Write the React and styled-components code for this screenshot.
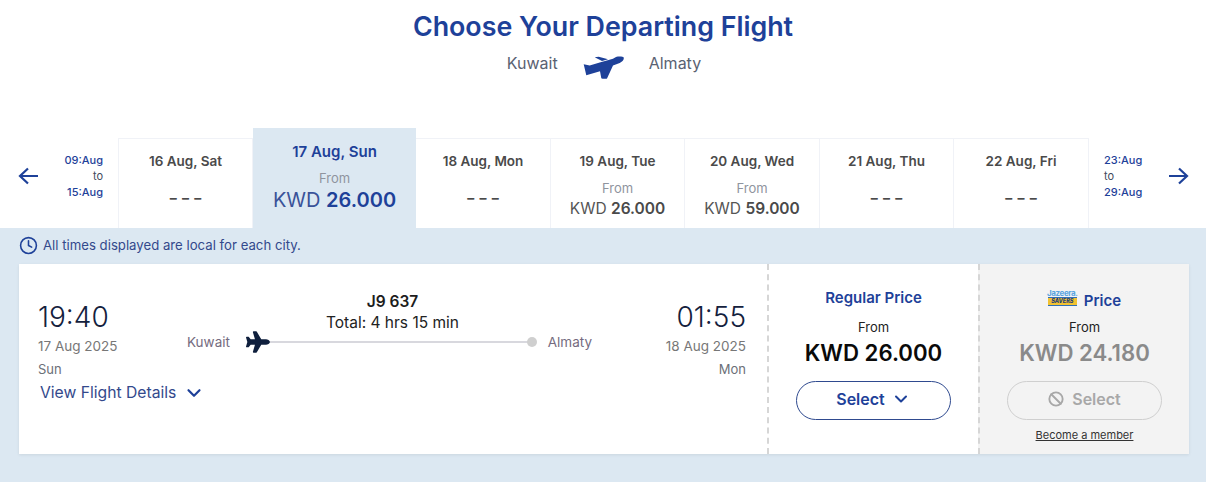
import React from 'react';
import styled, { createGlobalStyle } from 'styled-components';
import { FaPlane } from 'react-icons/fa';
import { LuBan, LuChevronDown, LuClock } from 'react-icons/lu';

const BLUE = '#1e4199';

const GlobalStyle = createGlobalStyle`
  html, body {
    margin: 0;
    padding: 0;
    background: #fff;
    font-family: Inter, "Liberation Sans", sans-serif;
  }
  * { box-sizing: border-box; }
`;

const Page = styled.div`
  width: 1206px;
  height: 482px;
  overflow: hidden;
  display: flex;
  flex-direction: column;
`;

const Header = styled.header`
  height: 128px;
  padding-top: 8px;
  display: flex;
  flex-direction: column;
  align-items: center;
`;

const Title = styled.h1`
  margin: 0;
  font-size: 26.8px;
  line-height: 36px;
  font-weight: 600;
  color: ${BLUE};
`;

const Route = styled.div`
  display: flex;
  align-items: center;
  gap: 25px;
  margin: 6px 0 0 2px;
  height: 26px;
  font-size: 16px;
  color: #5a6272;
`;

const Strip = styled.div`
  display: grid;
  grid-template-columns: 118px 135px 163px 135px 134px 135px 134px 135px 117px;
  align-items: end;
  height: 100px;
`;

const Nav = styled.div`
  height: 90px;
  display: flex;
  align-items: center;
  justify-content: space-between;
  padding: ${(p) => (p.$next ? '0 17px 14px 15px' : '0 15px 14px 18px')};
`;

const NavRange = styled.div`
  font-size: 11px;
  line-height: 16px;
  font-weight: 500;
  color: ${BLUE};
  text-align: ${(p) => (p.$next ? 'left' : 'right')};
  span { display: block; color: #444b5c; font-weight: 400; }
`;

const DayTab = styled.div`
  height: ${(p) => (p.$active ? '100px' : '90px')};
  padding-top: ${(p) => (p.$active ? '15px' : '13px')};
  background: ${(p) => (p.$active ? '#dce8f2' : '#fff')};
  border: ${(p) => (p.$active ? 'none' : '1px solid #f0f2f7')};
  border-left-width: ${(p) => (p.$active || p.$first ? undefined : '0')};
  border-bottom: none;
  text-align: center;
`;

const DayName = styled.div`
  font-size: ${(p) => (p.$active ? '15px' : '13.5px')};
  line-height: 18px;
  font-weight: 600;
  color: ${(p) => (p.$active ? BLUE : '#4a4a4a')};
`;

const Dashes = styled.div`
  margin-top: 16px;
  font-size: 14px;
  line-height: 24px;
  font-weight: 700;
  word-spacing: 2px;
  color: #4a4a4a;
`;

const FromLabel = styled.div`
  margin-top: ${(p) => (p.$active ? '9px' : '10px')};
  font-size: 13px;
  line-height: 16px;
  color: #8f949e;
`;

const TabPrice = styled.div`
  margin-top: ${(p) => (p.$active ? '1px' : '2px')};
  font-size: ${(p) => (p.$active ? '20px' : '15.5px')};
  line-height: ${(p) => (p.$active ? '26px' : '22px')};
  color: ${(p) => (p.$active ? '#3a5299' : '#555')};
  b {
    font-weight: 600;
    color: ${(p) => (p.$active ? BLUE : '#4a4a4a')};
  }
`;

const Panel = styled.section`
  flex: 1;
  background: #dce8f2;
  padding: 0 17px 0 19px;
`;

const Note = styled.div`
  height: 36px;
  padding-bottom: 2px;
  display: flex;
  align-items: center;
  gap: 5px;
  font-size: 13.2px;
  color: #33498c;
`;

const Card = styled.div`
  height: 190px;
  display: grid;
  grid-template-columns: 748px 211px 211px;
  background: #fff;
  box-shadow: 0 1px 3px rgba(0, 0, 0, 0.08);
`;

const Flight = styled.div`
  display: grid;
  grid-template-columns: 149px 405px 154px;
  padding: 35px 21px 0 19px;
  align-items: start;
`;

const Endpoint = styled.div`
  text-align: ${(p) => (p.$end ? 'right' : 'left')};
  white-space: nowrap;
`;

const Time = styled.div`
  font-size: 28px;
  line-height: 37px;
  font-weight: 300;
  color: #14213d;
`;

const FlightDate = styled.div`
  font-size: 13.5px;
  line-height: 20px;
  color: #777;
`;

const Weekday = styled.div`
  margin-top: 3px;
  font-size: 13px;
  line-height: 20px;
  color: #6b6f78;
`;

const DetailsLink = styled.a`
  display: inline-flex;
  align-items: center;
  gap: 7px;
  margin: 3px 0 0 2px;
  font-size: 15.7px;
  line-height: 22px;
  color: #33498c;
`;

const Middle = styled.div`
  display: flex;
  flex-direction: column;
  align-items: center;
  margin-top: -7px;
`;

const FlightNo = styled.div`
  padding-left: 6px;
  font-size: 15.5px;
  line-height: 20px;
  font-weight: 600;
  color: #1d1d1d;
`;

const Total = styled.div`
  padding-left: 6px;
  font-size: 15.5px;
  line-height: 22px;
  color: #222;
`;

const Track = styled.div`
  align-self: stretch;
  display: flex;
  align-items: center;
  margin-top: -2px;
  height: 20px;
  font-size: 13.5px;
  color: #756b80;
`;

const TrackLine = styled.div`
  flex: 1;
  height: 2px;
  margin-right: -1px;
  background: #d8d8de;
`;

const TrackDot = styled.span`
  width: 10px;
  height: 10px;
  border-radius: 50%;
  background: #cfcfcf;
  margin-right: 11px;
`;

const TrackPlane = styled(FaPlane)`
  margin-left: 16px;
  font-size: 24px;
  color: #0f1f3d;
`;

const Fare = styled.div`
  border-left: 2px dashed #d6d6d6;
  background: ${(p) => (p.$muted ? '#f3f3f3' : '#fff')};
  display: flex;
  flex-direction: column;
  align-items: center;
  padding-top: 22px;
`;

const FareTitle = styled.div`
  display: flex;
  align-items: center;
  gap: 7px;
  height: 22px;
  font-size: 15px;
  font-weight: 600;
  color: ${BLUE};
`;

const FareTitleShifted = styled.span`
  margin-top: 7px;
`;

const SaversLogo = styled.div`
  width: 29px;
  display: flex;
  flex-direction: column;
  align-items: center;
`;

const SaversName = styled.span`
  font-size: 8px;
  line-height: 8px;
  font-weight: 700;
  color: #5aa5e0;
  letter-spacing: -0.4px;
`;

const SaversBand = styled.span`
  width: 29px;
  height: 9px;
  background: #f2c230;
  border-top: 1px solid #2f6fb5;
  border-bottom: 1px solid #2f6fb5;
  font-size: 5.5px;
  line-height: 7px;
  font-weight: 800;
  font-style: italic;
  text-align: center;
  color: #1e3f7a;
`;

const FareFrom = styled.div`
  margin-top: 10px;
  font-size: 13px;
  line-height: 18px;
  color: #222;
`;

const FareAmount = styled.div`
  margin-top: 2px;
  font-size: 22.2px;
  line-height: 30px;
  font-weight: 600;
  color: ${(p) => (p.$muted ? '#8a8a8a' : '#0a0a0a')};
`;

const SelectButton = styled.button`
  margin-top: 13px;
  width: 155px;
  height: 39px;
  padding: 0 0 4px;
  border-radius: 20px;
  border: 1px solid ${(p) => (p.disabled ? '#cfcfcf' : '#2f4a8f')};
  background: transparent;
  display: flex;
  align-items: center;
  justify-content: center;
  gap: ${(p) => (p.disabled ? '8px' : '6px')};
  font-family: inherit;
  font-size: 16px;
  font-weight: 600;
  color: ${(p) => (p.disabled ? '#a8a8a8' : BLUE)};
`;

const MemberLink = styled.a`
  margin-top: 8px;
  font-size: 11px;
  line-height: 14px;
  color: #333;
  text-decoration: underline;
`;

const Arrow = ({ flip }) => (
  <svg width="21" height="18" viewBox="0 0 21 18" style={flip ? { transform: 'scaleX(-1)' } : undefined}>
    <path d="M20 9H2M10 1.5 2 9l8 7.5" fill="none" stroke={BLUE} strokeWidth="2.2" />
  </svg>
);

const RoutePlane = styled.svg`
  margin-top: 8px;
`;

const TiltedPlane = () => (
  <RoutePlane width="41" height="23" viewBox="0 0 41 23">
    <path
      fill={BLUE}
      d="M40.7 1.6C40 .4 36 .3 33 .9L30 2.8 16.7 6.4 6.7 9.6.7 8.2 3.3 19.2 17 15.2 18.3 22.3C19.5 23 23 23 24 22.4L30 9.4l6.7-2.4c2.5-1 4.6-3.4 4-5.4zM11.7 1.3l4-.6L25 3.2l-6 1.8-7.3-3.7z"
    />
  </RoutePlane>
);

const days = [
  { name: '16 Aug, Sat' },
  { name: '17 Aug, Sun', price: '26.000', active: true },
  { name: '18 Aug, Mon' },
  { name: '19 Aug, Tue', price: '26.000' },
  { name: '20 Aug, Wed', price: '59.000' },
  { name: '21 Aug, Thu' },
  { name: '22 Aug, Fri' },
];

const App = () => (
  <Page>
    <GlobalStyle />
    <Header>
      <Title>Choose Your Departing Flight</Title>
      <Route>
        <span>Kuwait</span>
        <TiltedPlane />
        <span>Almaty</span>
      </Route>
    </Header>

    <Strip>
      <Nav>
        <Arrow />
        <NavRange>
          09:Aug<span>to</span>15:Aug
        </NavRange>
      </Nav>
      {days.map((day, i) => (
        <DayTab key={day.name} $active={day.active} $first={i === 0}>
          <DayName $active={day.active}>{day.name}</DayName>
          {day.price ? (
            <>
              <FromLabel $active={day.active}>From</FromLabel>
              <TabPrice $active={day.active}>
                KWD <b>{day.price}</b>
              </TabPrice>
            </>
          ) : (
            <Dashes>– – –</Dashes>
          )}
        </DayTab>
      ))}
      <Nav $next>
        <NavRange $next>
          23:Aug<span>to</span>29:Aug
        </NavRange>
        <Arrow flip />
      </Nav>
    </Strip>

    <Panel>
      <Note>
        <LuClock size={19} color={BLUE} strokeWidth={2} />
        All times displayed are local for each city.
      </Note>
      <Card>
        <Flight>
          <Endpoint>
            <Time>19:40</Time>
            <FlightDate>17 Aug 2025</FlightDate>
            <Weekday>Sun</Weekday>
            <DetailsLink>
              View Flight Details <LuChevronDown size={22} strokeWidth={2.4} color={BLUE} />
            </DetailsLink>
          </Endpoint>
          <Middle>
            <FlightNo>J9 637</FlightNo>
            <Total>Total: 4 hrs 15 min</Total>
            <Track>
              <span>Kuwait</span>
              <TrackPlane />
              <TrackLine />
              <TrackDot />
              <span>Almaty</span>
            </Track>
          </Middle>
          <Endpoint $end>
            <Time>01:55</Time>
            <FlightDate>18 Aug 2025</FlightDate>
            <Weekday>Mon</Weekday>
          </Endpoint>
        </Flight>
        <Fare>
          <FareTitle>Regular Price</FareTitle>
          <FareFrom>From</FareFrom>
          <FareAmount>KWD 26.000</FareAmount>
          <SelectButton>
            Select <LuChevronDown size={20} strokeWidth={2.4} />
          </SelectButton>
        </Fare>
        <Fare $muted>
          <FareTitle>
            <SaversLogo>
              <SaversName>Jazeera.</SaversName>
              <SaversBand>SAVERS</SaversBand>
            </SaversLogo>
            <FareTitleShifted>Price</FareTitleShifted>
          </FareTitle>
          <FareFrom>From</FareFrom>
          <FareAmount $muted>KWD 24.180</FareAmount>
          <SelectButton disabled>
            <LuBan size={16} strokeWidth={2.8} /> Select
          </SelectButton>
          <MemberLink>Become a member</MemberLink>
        </Fare>
      </Card>
    </Panel>
  </Page>
);

export default App;
